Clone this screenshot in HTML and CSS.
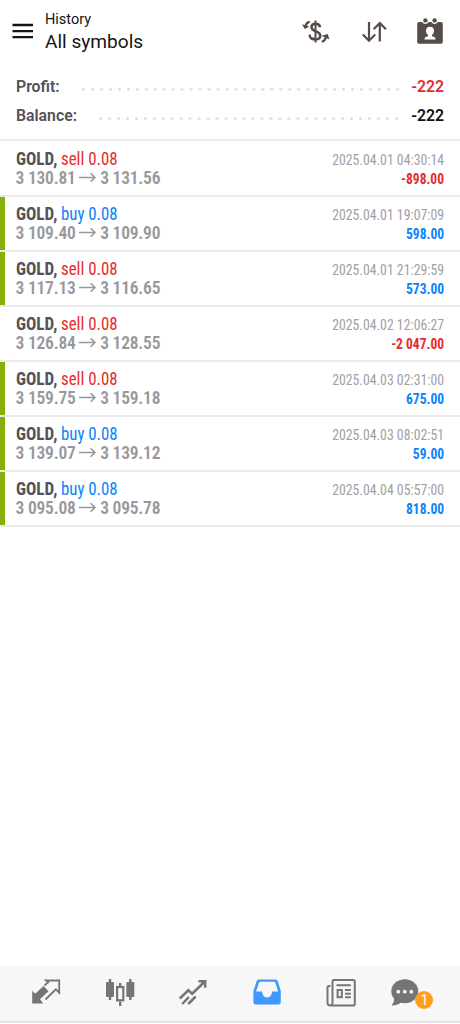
FILE: index.html
```html
<!DOCTYPE html>
<html lang="en">
<head>
<meta charset="utf-8">
<title>History</title>
<link rel="stylesheet" href="styles.css">
</head>
<body>
<div class="app">
  <header class="bar">
    <svg class="menu" width="22" height="16" viewBox="0 0 22 16"><path d="M.5 2h20.500M.5 8.200h20.500M.5 14.200h20.500" stroke="#151515" stroke-width="2.300"/></svg>
    <div class="titles"><div class="sub">History</div><div class="title">All symbols</div></div>
    <div class="tools">
      <svg width="30" height="28" viewBox="0 0 30 28" fill="none" stroke="#574b48"><path d="M14.500 2.500v22" stroke-width="2"/><path d="M19.200 9.200C18.600 6.700 17 5.700 14.700 5.700c-2.500 0-4.200 1.400-4.200 3.600 0 4.900 8.800 3.400 8.800 8.300 0 2.500-2 3.800-4.500 3.800-1.700 0-3-.5-3.800-1.500" stroke-width="2.500"/><path d="M8.800 4.200C6.800 4 5.300 5 4.500 8" stroke-width="2.300"/><path d="M1 6.300l2.700 4.700 4.800-2.600z" fill="#574b48" stroke="none"/><path d="M20.800 23.500c2.200 0 3.600-2 4.400-5.300" stroke-width="2.300"/><path d="M20.500 17.700l6.300-1.700 1.500 5.500z" fill="#574b48" stroke="none"/><path d="M8.500 16.500c.3 2.500 1.800 4.500 4 5" stroke-width="2.300"/></svg>
      <svg width="26" height="24" viewBox="0 0 26 24" fill="none" stroke="#574b48" stroke-width="2.200"><path d="M8 2v18.500M1.800 14.500L8 20.700l6.200-6.200M18.800 21.500V3M12.600 9.200L18.800 3 25 9.200"/></svg>
      <svg width="26" height="26" viewBox="0 0 26 26"><path d="M2 4h3.200a3.600 3.600 0 0 0 6.400 0h2.800a3.600 3.600 0 0 0 6.400 0H24a1.800 1.800 0 0 1 1.800 1.800V24A1.800 1.800 0 0 1 24 25.800H2A1.800 1.800 0 0 1 .2 24V5.800A1.800 1.800 0 0 1 2 4z" fill="#574b48"/><circle cx="8.400" cy="2.400" r="2.200" fill="#574b48"/><circle cx="17.600" cy="2.400" r="2.200" fill="#574b48"/><path d="M13 8.800c2.500 0 4 1.500 4 3.900 0 1.900-.9 3.300-1.900 4v1.500c2.200.6 3.500 1.300 3.500 3.300H7.400c0-2 1.300-2.700 3.500-3.300v-1.500c-1-.7-1.900-2.100-1.900-4 0-2.400 1.500-3.900 4-3.900z" fill="#fff"/></svg>
    </div>
  </header>
  <section class="summary">
    <div class="line"><span>Profit:</span><i class="dots dots-profit"></i><span class="end red">-222</span></div>
    <div class="line"><span>Balance:</span><i class="dots dots-balance"></i><span class="end black">-222</span></div>
  </section>
  <main class="deals">
    <div class="deal"><div class="left"><div class="name"><b>GOLD,</b><span class="side red">sell 0.08</span></div><div class="price">3 130.81 <svg class="arrow" viewBox="0 0 16 10"><path d="M0 5h15M11 1l4 4-4 4"/></svg> 3 131.56</div></div><div class="right"><div class="date">2025.04.01 04:30:14</div><div class="sum red">-898.00</div></div></div>
    <div class="deal win"><div class="left"><div class="name"><b>GOLD,</b><span class="side blue">buy 0.08</span></div><div class="price">3 109.40 <svg class="arrow" viewBox="0 0 16 10"><path d="M0 5h15M11 1l4 4-4 4"/></svg> 3 109.90</div></div><div class="right"><div class="date">2025.04.01 19:07:09</div><div class="sum blue">598.00</div></div></div>
    <div class="deal win"><div class="left"><div class="name"><b>GOLD,</b><span class="side red">sell 0.08</span></div><div class="price">3 117.13 <svg class="arrow" viewBox="0 0 16 10"><path d="M0 5h15M11 1l4 4-4 4"/></svg> 3 116.65</div></div><div class="right"><div class="date">2025.04.01 21:29:59</div><div class="sum blue">573.00</div></div></div>
    <div class="deal"><div class="left"><div class="name"><b>GOLD,</b><span class="side red">sell 0.08</span></div><div class="price">3 126.84 <svg class="arrow" viewBox="0 0 16 10"><path d="M0 5h15M11 1l4 4-4 4"/></svg> 3 128.55</div></div><div class="right"><div class="date">2025.04.02 12:06:27</div><div class="sum red">-2 047.00</div></div></div>
    <div class="deal win"><div class="left"><div class="name"><b>GOLD,</b><span class="side red">sell 0.08</span></div><div class="price">3 159.75 <svg class="arrow" viewBox="0 0 16 10"><path d="M0 5h15M11 1l4 4-4 4"/></svg> 3 159.18</div></div><div class="right"><div class="date">2025.04.03 02:31:00</div><div class="sum blue">675.00</div></div></div>
    <div class="deal win"><div class="left"><div class="name"><b>GOLD,</b><span class="side blue">buy 0.08</span></div><div class="price">3 139.07 <svg class="arrow" viewBox="0 0 16 10"><path d="M0 5h15M11 1l4 4-4 4"/></svg> 3 139.12</div></div><div class="right"><div class="date">2025.04.03 08:02:51</div><div class="sum blue">59.00</div></div></div>
    <div class="deal win"><div class="left"><div class="name"><b>GOLD,</b><span class="side blue">buy 0.08</span></div><div class="price">3 095.08 <svg class="arrow" viewBox="0 0 16 10"><path d="M0 5h15M11 1l4 4-4 4"/></svg> 3 095.78</div></div><div class="right"><div class="date">2025.04.04 05:57:00</div><div class="sum blue">818.00</div></div></div>
  </main>
  <nav class="tabs">
    <svg width="30" height="28" viewBox="0 0 30 28"><path d="M1.200 25.500V12.800l3 2.900 8.300-7.700 5 5.300-8.500 8 3.200 4.200z" fill="#757575"/><path d="M13.500 7.500l3.700-3.200-2.200-1.800h13.200v12.300l-3.300-3.500L14.500 21.500" fill="none" stroke="#757575" stroke-width="1.800"/></svg>
    <svg width="30" height="30" viewBox="0 0 30 30"><g fill="#757575"><rect x="1" y="4" width="8" height="15" rx="1"/><rect x="21.300" y="4" width="8" height="15" rx="1"/></g><path d="M5 1v21M25.300 1v21M15.200 5v5M15.200 23.500V28" stroke="#757575" stroke-width="2.400"/><rect x="12.100" y="9" width="6.200" height="13.300" fill="none" stroke="#757575" stroke-width="2.200"/></svg>
    <svg width="30" height="28" viewBox="0 0 30 28" fill="none" stroke="#757575" stroke-width="2.500"><path d="M1.800 20.500l8.500-8.200 3.900 3.400L26.300 4M20.500 3.300h6.700v6.500M4.200 26l6.700-7M10.200 26l7.500-7.500"/></svg>
    <svg width="30" height="28" viewBox="0 0 30 28"><path d="M7 1.500h16.500a2.500 2.500 0 0 1 2.200 1.600l3.100 9.900v11a2.500 2.500 0 0 1-2.500 2.500H3.900A2.500 2.500 0 0 1 1.400 24V13L4.700 3.100A2.500 2.500 0 0 1 7 1.500z" fill="#3e98fe"/><path d="M8.200 3.800h14a1.200 1.200 0 0 1 1.100.8l2.900 9h-5.700c-.4 0-.5.500-.6 1.100-.5 3.200-2.200 4.700-4.800 4.700s-4.300-1.500-4.800-4.700c-.1-.6-.2-1.100-.6-1.100H4l3.100-9a1.200 1.200 0 0 1 1.100-.8z" fill="#f7f7f7"/></svg>
    <svg width="30" height="30" viewBox="0 0 30 30" fill="none" stroke="#757575" stroke-width="2"><path d="M8 2h19.300a1.500 1.500 0 0 1 1.500 1.500v22.200a1.800 1.800 0 0 1-1.800 1.800H4.200a2.700 2.700 0 0 1-2.700-2.700V9.500A1.500 1.500 0 0 1 3 8h1.500M8 2a1.500 1.500 0 0 0-1.500 1.500v21.300c0 1.500-1 2.700-2.300 2.700M10.500 7.300h14.300M19 12h5.800M19 15.700h5.800M19 19.300h5.800" stroke-width="2"/><rect x="11.600" y="12" width="4.200" height="7.200"/></svg>
    <div class="chat"><svg width="30" height="30" viewBox="0 0 30 30"><ellipse cx="14.800" cy="13.300" rx="13.500" ry="12" fill="#757575"/><path d="M4 19c.5 4.500-1 6.500-2.500 8.500 4.500.2 7.500-1.200 10-3.500z" fill="#757575"/><g fill="#f7f7f7"><circle cx="8.300" cy="13.700" r="1.900"/><circle cx="14.800" cy="13.700" r="1.900"/><circle cx="21.300" cy="13.700" r="1.900"/></g></svg><span class="badge">1</span></div>
  </nav>
  <div class="foot"></div>
</div>
</body>
</html>
```
FILE: styles.css
```css
* { box-sizing: border-box; }
body { margin: 0; background: #fff; font-family: Roboto, sans-serif; }
.app { width: 460px; height: 1024px; display: flex; flex-direction: column; overflow: hidden; }
.bar { height: 72px; display: flex; padding: 10px 17px 0 12px; }
.menu { margin-top: 13px; margin-right: 11px; }
.titles { color: #151515; white-space: nowrap; }
.sub { font-size: 14.500px; line-height: 19px; }
.title { font-size: 19.100px; line-height: 26px; }
.tools { margin-left: auto; display: flex; align-items: flex-start; gap: 30px; }
.tools svg:nth-child(1) { margin-top: 8px; margin-right: 1px; }
.tools svg:nth-child(2) { margin-top: 10px; margin-left: -1px; }
.tools svg:nth-child(3) { margin-top: 8px; }
.summary { height: 67px; padding: 0 16px; }
.line { height: 29px; display: flex; align-items: center; font-size: 15.800px; font-weight: 600; color: #525258; }
.dots { height: 3px; margin-top: 6px; background: radial-gradient(circle at 1.500px 1.500px, #dedede 1.100px, transparent 1.700px) 0 0 / 8.970px 3px repeat-x; }
.dots-profit { width: 318px; margin-left: auto; }
.dots-balance { width: 301px; margin-left: auto; }
.end { width: 44px; text-align: right; }
.red { color: #e52b2d; }
.blue { color: #0a83fc; }
.black { color: #111; }
.deals { border-top: 2px solid #ebebed; padding-top: 1px; font-family: "Roboto Condensed", Roboto, sans-serif; font-stretch: 75%; }
.deal { height: 55px; border-bottom: 2px solid #ebebed; padding: 7px 16px 0 15.500px; display: flex; justify-content: space-between; white-space: nowrap; }
.win { background: linear-gradient(90deg, #84b007 4.700px, #fff 4.700px); }
.name { font-size: 18px; line-height: 20px; color: #525258; }
.name b { display: inline-block; width: 42px; transform: scaleX(.95); transform-origin: left; }
.side { display: inline-block; margin-left: 3px; transform: scaleX(.935); transform-origin: left; }
.price { font-size: 17.500px; line-height: 18px; font-weight: 600; color: #98989c; letter-spacing: -.22px; }
.arrow { width: 17px; height: 11px; fill: none; stroke: #98989c; stroke-width: 1.500; vertical-align: 1px; }
.right { text-align: right; padding-top: 2px; }
.date { font-size: 15px; line-height: 19px; color: #a0a0a4; transform: scaleX(.917); transform-origin: right; }
.sum { font-size: 15px; line-height: 19px; font-weight: 700; transform: scaleX(.9); transform-origin: right; }
.tabs { margin-top: auto; height: 55px; background: #f7f7f7; display: flex; gap: 43.700px; padding: 12px 0 0 31px; }
.tabs > * { flex: none; }
.chat { position: relative; width: 30px; height: 30px; margin-left: -9px; }
.badge { position: absolute; left: 25px; top: 13px; width: 18px; height: 18px; border-radius: 50%; background: #ff9d1c; color: #fff; font-size: 14px; line-height: 18px; text-align: center; }
.foot { height: 3px; border-top: 2px solid #e4e4e4; background: #fff; }
```
